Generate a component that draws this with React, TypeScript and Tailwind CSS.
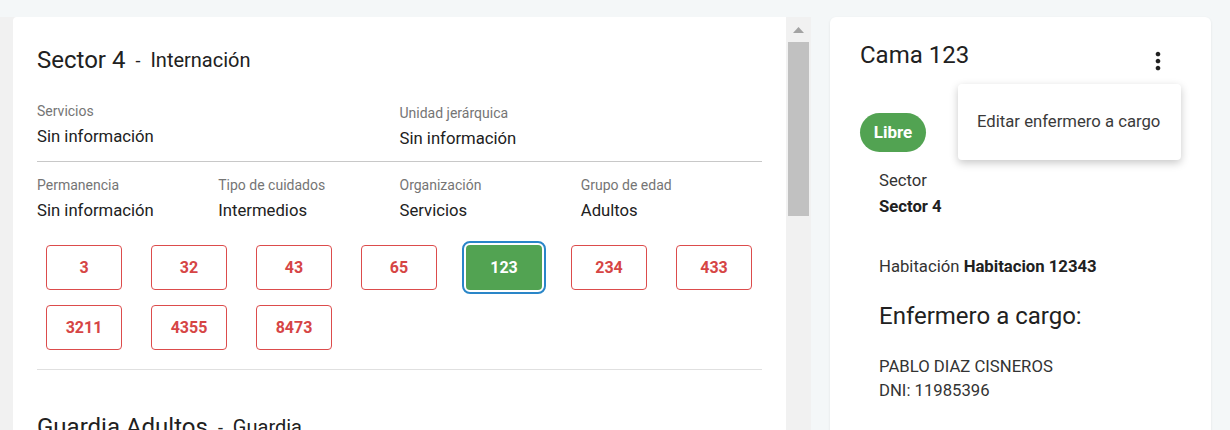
import { useState } from 'react';

/** One label/value pair in the sector detail grid. */
function Field({ label, value, shift }: { label: string; value: string; shift?: boolean }) {
  return (
    <div className={shift ? 'mt-[2px]' : ''}>
      <p className="text-[14px] leading-4 text-[#757575]">{label}</p>
      <p className="mt-[6px] text-[16.7px] leading-6 text-[#212121]">{value}</p>
    </div>
  );
}

const BEDS = ['3', '32', '43', '65', '123', '234', '433', '3211', '4355', '8473'];

/** Bed tile: red outline for the rest, green when selected. */
function BedButton({ label, selected }: { label: string; selected: boolean }) {
  if (selected) {
    return (
      <button className="flex h-[45px] w-[76px] items-center justify-center rounded-[4px] bg-[#52a352] text-[16px] font-bold text-white outline-2 outline-offset-[2px] outline-[#2a86c8]">
        {label}
      </button>
    );
  }
  return (
    <button className="flex h-[45px] w-[76px] items-center justify-center rounded-[4px] border border-[#dc4c4c] bg-white text-[16px] font-bold text-[#d64545]">
      {label}
    </button>
  );
}

function SectorTitle({ name, kind }: { name: string; kind: string }) {
  return (
    <div className="flex h-7 items-center text-[#212121]">
      <h2 className="text-[24px] leading-7">{name}</h2>
      <span className="mx-[10px] text-[18px]">-</span>
      <span className="text-[20px]">{kind}</span>
    </div>
  );
}

function SectorCard() {
  const [selected] = useState('123');

  return (
    <div className="flex-1 overflow-hidden rounded-tl-[4px] bg-white px-6 pt-[29px]">
      <SectorTitle name="Sector 4" kind="Internación" />

      <div className="mt-[29px] grid grid-cols-2">
        <Field label="Servicios" value="Sin información" />
        <Field label="Unidad jerárquica" value="Sin información" shift />
      </div>
      <div className="mt-[10px] h-px bg-[#c8c8c8]" />

      <div className="mt-[15px] grid grid-cols-4">
        <Field label="Permanencia" value="Sin información" />
        <Field label="Tipo de cuidados" value="Intermedios" />
        <Field label="Organización" value="Servicios" />
        <Field label="Grupo de edad" value="Adultos" />
      </div>

      {/* Bed grid */}
      <div className="ml-[9px] mt-[22px] flex flex-wrap gap-x-[29px] gap-y-[15px]">
        {BEDS.map((b) => (
          <BedButton key={b} label={b} selected={b === selected} />
        ))}
      </div>
      <div className="mt-[19px] h-px bg-[#e0e0e0]" />

      <div className="mt-[43px]">
        <SectorTitle name="Guardia Adultos" kind="Guardia" />
      </div>
    </div>
  );
}

function FakeScrollbar() {
  return (
    <div className="flex w-[25px] flex-col bg-[#f1f1f1]">
      <div className="flex h-[25px] items-center justify-center">
        <svg width="11" height="6" viewBox="0 0 11 6">
          <path d="M5.5 0 L11 6 L0 6 Z" fill="#a3a3a3" />
        </svg>
      </div>
      <div className="mx-[2px] h-[174px] bg-[#c1c1c1]" />
    </div>
  );
}

function BedCard() {
  return (
    <div className="relative h-[430px] w-[381px] rounded-[6px] bg-white px-[30px] pt-[24px] shadow-[0_1px_3px_rgba(0,0,0,0.08)]">
      <div className="flex items-start justify-between">
        <h2 className="text-[24px] leading-7 text-[#212121]">Cama 123</h2>
        <button className="-mr-[1px] mt-[-4px] flex h-12 w-12 items-center justify-center">
          <svg width="28" height="28" viewBox="0 0 24 24" fill="#212121">
            <path d="M12 8c1.1 0 2-.9 2-2s-.9-2-2-2-2 .9-2 2 .9 2 2 2zm0 2c-1.1 0-2 .9-2 2s.9 2 2 2 2-.9 2-2-.9-2-2-2zm0 6c-1.1 0-2 .9-2 2s.9 2 2 2 2-.9 2-2-.9-2-2-2z" />
          </svg>
        </button>
      </div>

      <span className="mt-[28px] flex h-[39px] w-[66px] items-center justify-center rounded-full bg-[#52a352] text-[17px] font-bold text-white">
        Libre
      </span>

      <div className="pl-[19px] text-[16.7px] leading-6 text-[#333333]">
        <p className="mt-[17px]">Sector</p>
        <p className="mt-[2px] font-bold text-[#212121]">Sector 4</p>
        <p className="mt-[36px]">
          Habitación <span className="font-bold text-[#212121]">Habitacion 12343</span>
        </p>
        <h3 className="mt-[21px] text-[24px] leading-8 text-[#212121]">Enfermero a cargo:</h3>
        <p className="mt-[23px]">PABLO DIAZ CISNEROS</p>
        <p>DNI: 11985396</p>
      </div>

      {/* Open actions menu */}
      <div className="absolute right-[30px] top-[67px] w-[223px] rounded-[4px] bg-white py-2 shadow-[0_3px_8px_rgba(0,0,0,0.22)]">
        <div className="flex h-[60px] items-center px-[19px] text-[16.7px] text-[#3a3a3a]">
          Editar enfermero a cargo
        </div>
      </div>
    </div>
  );
}

export default function App() {
  return (
    <div className="flex h-[430px] w-[1230px] overflow-hidden bg-[#f4f7f8] pt-[17px] font-['Roboto',sans-serif]">
      <div className="flex w-[811px] bg-[#f1f1f1] pl-[13px]">
        <SectorCard />
        <FakeScrollbar />
      </div>
      <div className="ml-[19px] flex">
        <BedCard />
      </div>
    </div>
  );
}
